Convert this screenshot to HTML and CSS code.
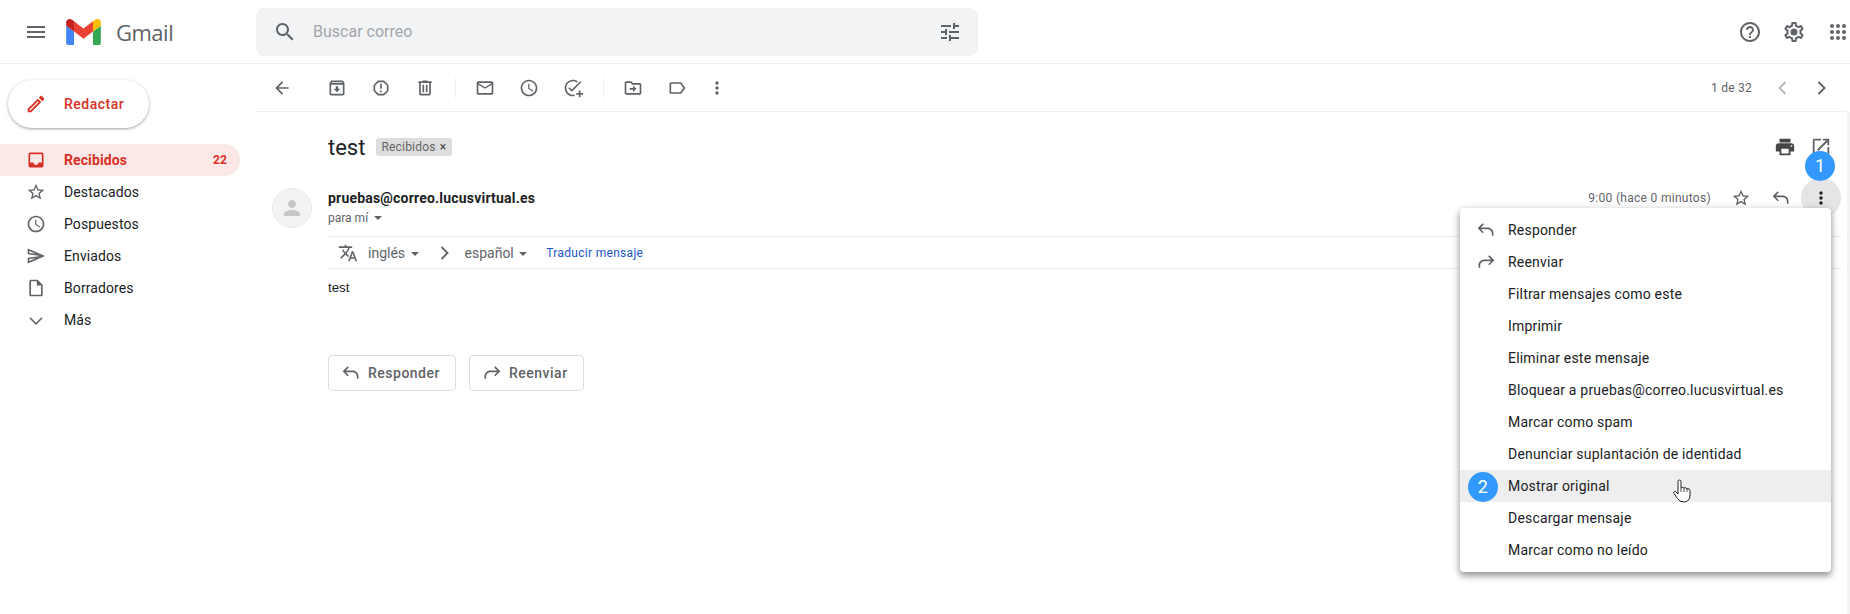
FILE: index.html
```html
<html>
<head>
  <title>Gmail</title>
  <link rel="stylesheet" href="styles.css">
</head>
<body>
  <svg class="sprite">
    <symbol id="i-menu" viewBox="0 0 24 24"><path d="M3 18h18v-2H3v2zm0-5h18v-2H3v2zm0-7v2h18V6H3z"/></symbol>
    <symbol id="i-search" viewBox="0 0 24 24"><path d="M15.5 14h-.79l-.28-.27C15.41 12.59 16 11.11 16 9.5 16 5.91 13.09 3 9.5 3S3 5.91 3 9.5 5.91 16 9.5 16c1.61 0 3.09-.59 4.23-1.57l.27.28v.79l5 4.99L20.49 19l-4.99-5zm-6 0C7.01 14 5 11.99 5 9.5S7.01 5 9.5 5 14 7.01 14 9.5 11.99 14 9.5 14z"/></symbol>
    <symbol id="i-tune" viewBox="0 0 24 24"><path d="M3 17v2h6v-2H3zM3 5v2h10V5H3zm10 16v-2h8v-2h-8v-2h-2v6h2zM7 9v2H3v2h4v2h2V9H7zm14 4v-2H11v2h10zm-6-4h2V7h4V5h-4V3h-2v6z"/></symbol>
    <symbol id="i-help" viewBox="0 0 24 24"><path d="M11 18h2v-2h-2v2zm1-16C6.48 2 2 6.48 2 12s4.48 10 10 10 10-4.48 10-10S17.52 2 12 2zm0 18c-4.41 0-8-3.59-8-8s3.59-8 8-8 8 3.59 8 8-3.59 8-8 8zm0-14c-2.21 0-4 1.79-4 4h2c0-1.1.9-2 2-2s2 .9 2 2c0 2-3 1.75-3 5h2c0-2.25 3-2.5 3-5 0-2.21-1.79-4-4-4z"/></symbol>
    <symbol id="i-gear" viewBox="0 0 24 24"><path d="M19.43 12.98c.04-.32.07-.64.07-.98 0-.34-.03-.66-.07-.98l2.11-1.65c.19-.15.24-.42.12-.64l-2-3.46c-.09-.16-.26-.25-.44-.25-.06 0-.12.01-.17.03l-2.49 1c-.52-.4-1.08-.73-1.69-.98l-.38-2.65C14.46 2.18 14.25 2 14 2h-4c-.25 0-.46.18-.49.42l-.38 2.65c-.61.25-1.17.59-1.69.98l-2.49-1c-.06-.02-.12-.03-.18-.03-.17 0-.34.09-.43.25l-2 3.46c-.13.22-.07.49.12.64l2.11 1.65c-.04.32-.07.65-.07.98 0 .33.03.66.07.98l-2.11 1.65c-.19.15-.24.42-.12.64l2 3.46c.09.16.26.25.44.25.06 0 .12-.01.17-.03l2.49-1c.52.4 1.08.73 1.69.98l.38 2.65c.03.24.24.42.49.42h4c.25 0 .46-.18.49-.42l.38-2.65c.61-.25 1.17-.59 1.69-.98l2.49 1c.06.02.12.03.18.03.17 0 .34-.09.43-.25l2-3.46c.12-.22.07-.49-.12-.64l-2.11-1.65zm-1.98-1.71c.04.31.05.52.05.73 0 .21-.02.43-.05.73l-.14 1.13.89.7 1.08.84-.7 1.21-1.27-.51-1.04-.42-.9.68c-.43.32-.84.56-1.25.73l-1.06.43-.16 1.13-.2 1.35h-1.4l-.19-1.35-.16-1.13-1.06-.43c-.43-.18-.83-.41-1.23-.71l-.91-.7-1.06.43-1.27.51-.7-1.21 1.08-.84.89-.7-.14-1.13c-.03-.31-.05-.54-.05-.74s.02-.43.05-.73l.14-1.13-.89-.7-1.08-.84.7-1.21 1.27.51 1.04.42.9-.68c.43-.32.84-.56 1.25-.73l1.06-.43.16-1.13.2-1.35h1.39l.19 1.35.16 1.13 1.06.43c.43.18.83.41 1.23.71l.91.7 1.06-.43 1.27-.51.7 1.21-1.07.85-.89.7.14 1.13zM12 8.5a3.5 3.5 0 1 0 0 7 3.5 3.5 0 0 0 0-7z"/></symbol>
    <symbol id="i-apps" viewBox="0 0 24 24"><circle cx="6" cy="6" r="2"/><circle cx="12" cy="6" r="2"/><circle cx="18" cy="6" r="2"/><circle cx="6" cy="12" r="2"/><circle cx="12" cy="12" r="2"/><circle cx="18" cy="12" r="2"/><circle cx="6" cy="18" r="2"/><circle cx="12" cy="18" r="2"/><circle cx="18" cy="18" r="2"/></symbol>
    <symbol id="i-pencil" viewBox="0 0 24 24"><path d="M14.06 9.02l.92.92L5.92 19H5v-.92l9.06-9.06M17.66 3c-.25 0-.51.1-.7.29l-1.83 1.83 3.75 3.75 1.83-1.83c.39-.39.39-1.02 0-1.41l-2.34-2.34c-.2-.2-.45-.29-.71-.29zm-3.6 3.19L3 17.25V21h3.75L17.81 9.94l-3.75-3.75z"/></symbol>
    <symbol id="i-inbox" viewBox="0 0 24 24"><path d="M19 3H5c-1.1 0-2 .9-2 2v14c0 1.1.9 2 2 2h14c1.1 0 2-.9 2-2V5c0-1.1-.9-2-2-2zm0 12h-4c0 1.66-1.34 3-3 3s-3-1.34-3-3H5V5h14v10z"/></symbol>
    <symbol id="i-star" viewBox="0 0 24 24"><path d="M22 9.24l-7.19-.62L12 2 9.19 8.63 2 9.24l5.46 4.73L5.82 21 12 17.27 18.18 21l-1.63-7.03L22 9.24zM12 15.4l-3.76 2.27 1-4.28-3.32-2.88 4.38-.38L12 6.1l1.71 4.04 4.38.38-3.32 2.88 1 4.28L12 15.4z"/></symbol>
    <symbol id="i-clock" viewBox="0 0 24 24"><path d="M11.99 2C6.47 2 2 6.48 2 12s4.47 10 9.99 10C17.52 22 22 17.52 22 12S17.52 2 11.99 2zM12 20c-4.42 0-8-3.58-8-8s3.58-8 8-8 8 3.58 8 8-3.58 8-8 8zm.5-13H11v6l5.25 3.15.75-1.23-4.5-2.67z"/></symbol>
    <symbol id="i-send" viewBox="0 0 24 24"><path d="M4.01 6.03l7.51 3.22-7.52-1 .01-2.22m7.5 8.72L4 17.97v-2.22l7.51-1M2.01 3L2 10l15 2-15 2 .01 7L23 12 2.01 3z"/></symbol>
    <symbol id="i-file" viewBox="0 0 24 24"><path d="M14 2H6c-1.1 0-1.99.9-1.99 2L4 20c0 1.1.89 2 1.99 2H18c1.1 0 2-.9 2-2V8l-6-6zM6 20V4h7v5h5v11H6z"/></symbol>
    <symbol id="i-down" viewBox="0 0 24 24"><path d="M5.4 8.6L4 10l8 8 8-8-1.4-1.4-6.6 6.6z"/></symbol>
    <symbol id="i-back" viewBox="0 0 24 24"><path d="M20 11H7.83l5.59-5.59L12 4l-8 8 8 8 1.41-1.41L7.83 13H20v-2z"/></symbol>
    <symbol id="i-archive" viewBox="0 0 24 24"><path d="M20.54 5.23l-1.39-1.68C18.88 3.21 18.47 3 18 3H6c-.47 0-.88.21-1.16.55L3.46 5.23C3.17 5.57 3 6.02 3 6.5V19c0 1.1.9 2 2 2h14c1.1 0 2-.9 2-2V6.5c0-.48-.17-.93-.46-1.27zM6.24 5h11.52l.83 1H5.42l.82-1zM5 19V8h14v11H5zm8.45-9h-2.9v3H8l4 4 4-4h-2.55z"/></symbol>
    <symbol id="i-report" viewBox="0 0 24 24"><path d="M15.73 3H8.27L3 8.27v7.46L8.27 21h7.46L21 15.73V8.27L15.73 3zM19 14.9L14.9 19H9.1L5 14.9V9.1L9.1 5h5.8L19 9.1v5.8zM11 7h2v6h-2zM11 15h2v2h-2z"/></symbol>
    <symbol id="i-trash" viewBox="0 0 24 24"><path d="M15 4V3H9v1H4v2h1v13c0 1.1.9 2 2 2h10c1.1 0 2-.9 2-2V6h1V4h-5zm2 15H7V6h10v13zM9 8h2v9H9zm4 0h2v9h-2z"/></symbol>
    <symbol id="i-mail" viewBox="0 0 24 24"><path d="M22 6c0-1.1-.9-2-2-2H4c-1.1 0-2 .9-2 2v12c0 1.1.9 2 2 2h16c1.1 0 2-.9 2-2V6zm-2 0l-8 5-8-5h16zm0 12H4V8l8 5 8-5v10z"/></symbol>
    <symbol id="i-task" viewBox="0 0 24 24"><path d="M22 5.18L10.59 16.6l-4.24-4.24 1.41-1.41 2.83 2.83 10-10L22 5.18zM4 12c0-4.42 3.58-8 8-8 1.58 0 3.04.46 4.28 1.25l1.44-1.44C16.1 2.67 14.13 2 12 2 6.48 2 2 6.48 2 12s4.48 10 10 10c.7 0 1.4-.07 2-.2v-2.05c-.64.16-1.31.25-2 .25-4.42 0-8-3.58-8-8zM19 15h2v3h3v2h-3v3h-2v-3h-3v-2h3z"/></symbol>
    <symbol id="i-move" viewBox="0 0 24 24"><path d="M20 6h-8l-2-2H4c-1.1 0-1.99.9-1.99 2L2 18c0 1.1.9 2 2 2h16c1.1 0 2-.9 2-2V8c0-1.1-.9-2-2-2zm0 12H4V6h5.17l2 2H20v10zm-8-4H8v-2h4V9l4 4-4 4v-3z"/></symbol>
    <symbol id="i-label" viewBox="0 0 24 24"><path d="M17.63 5.84C17.27 5.33 16.67 5 16 5L5 5.01C3.9 5.01 3 5.9 3 7v10c0 1.1.9 1.99 2 1.99L16 19c.67 0 1.27-.33 1.63-.84L22 12l-4.37-6.16zM16 17H5V7h11l3.55 5L16 17z"/></symbol>
    <symbol id="i-more" viewBox="0 0 24 24"><path d="M12 8c1.1 0 2-.9 2-2s-.9-2-2-2-2 .9-2 2 .9 2 2 2zm0 2c-1.1 0-2 .9-2 2s.9 2 2 2 2-.9 2-2-.9-2-2-2zm0 6c-1.1 0-2 .9-2 2s.9 2 2 2 2-.9 2-2-.9-2-2-2z"/></symbol>
    <symbol id="i-left" viewBox="0 0 24 24"><path d="M15.4 4L17 5.6 10.6 12l6.4 6.4-1.6 1.6-8-8z"/></symbol>
    <symbol id="i-right" viewBox="0 0 24 24"><path d="M8.6 4L7 5.6 13.4 12 7 18.4 8.6 20l8-8z"/></symbol>
    <symbol id="i-print" viewBox="0 0 24 24"><path d="M19 8H5c-1.66 0-3 1.34-3 3v6h4v4h12v-4h4v-6c0-1.66-1.34-3-3-3zm-3 11H8v-5h8v5zm3-7c-.55 0-1-.45-1-1s.45-1 1-1 1 .45 1 1-.45 1-1 1zm-1-9H6v4h12V3z"/></symbol>
    <symbol id="i-popout" viewBox="0 0 24 24"><path d="M19 19H5V5h7V3H5c-1.11 0-2 .9-2 2v14c0 1.1.89 2 2 2h14c1.1 0 2-.9 2-2v-7h-2v7zM14 3v2h3.59l-9.83 9.83 1.41 1.41L19 6.41V10h2V3h-7z"/></symbol>
    <symbol id="i-reply" viewBox="0 0 24 24"><path d="M9.4 5.4L8 4l-6 6 6 6 1.4-1.4L5.8 11H14c2.8 0 5 2.2 5 5v3h2v-3c0-3.9-3.1-7-7-7H5.8z"/></symbol>
    <symbol id="i-forward" viewBox="0 0 24 24"><path d="M14.6 5.4L16 4l6 6-6 6-1.4-1.4 3.6-3.6H10c-2.8 0-5 2.2-5 5v3H3v-3c0-3.9 3.1-7 7-7h8.2z"/></symbol>
    <symbol id="i-translate" viewBox="0 0 24 24"><path d="M12.87 15.07l-2.54-2.51.03-.03c1.74-1.94 2.98-4.17 3.71-6.53H17V4h-7V2H8v2H1v1.99h11.17C11.5 7.92 10.44 9.75 9 11.35 8.07 10.32 7.3 9.19 6.69 8h-2c.73 1.63 1.73 3.17 2.98 4.56l-5.09 5.02L4 19l5-5 3.11 3.11.76-2.04zM18.5 10h-2L12 22h2l1.12-3h4.75L21 22h2l-4.5-12zm-2.62 7l1.62-4.33L19.12 17h-3.24z"/></symbol>
    <symbol id="i-person" viewBox="0 0 24 24"><path d="M12 12c2.21 0 4-1.79 4-4s-1.79-4-4-4-4 1.79-4 4 1.79 4 4 4zm0 2c-2.67 0-8 1.34-8 4v2h16v-2c0-2.66-5.33-4-8-4z"/></symbol>
  </svg>

  <div class="header">
    <svg class="icon header-menu"><use href="#i-menu"/></svg>
    <svg class="logo" viewBox="52 42 88 66">
      <path fill="#4285f4" d="M58 108h14V74L52 59v43c0 3.32 2.69 6 6 6"/>
      <path fill="#34a853" d="M120 108h14c3.32 0 6-2.69 6-6V59l-20 15"/>
      <path fill="#fbbc04" d="M120 48v26l20-15v-8c0-7.42-8.47-11.65-14.4-7.2"/>
      <path fill="#ea4335" d="M72 74V48l24 18 24-18v26L96 92"/>
      <path fill="#c5221f" d="M52 51v8l20 15V48l-5.6-4.2c-5.94-4.45-14.4-.22-14.4 7.2"/>
    </svg>
    <div class="brand">Gmail</div>
    <div class="search">
      <svg class="icon search-icon"><use href="#i-search"/></svg>
      <div class="search-text">Buscar correo</div>
      <svg class="icon"><use href="#i-tune"/></svg>
    </div>
    <div class="header-right">
      <svg class="icon"><use href="#i-help"/></svg>
      <svg class="icon"><use href="#i-gear"/></svg>
      <svg class="icon"><use href="#i-apps"/></svg>
    </div>
  </div>

  <div class="layout">
    <div class="sidebar">
      <div class="compose">
        <svg class="icon"><use href="#i-pencil"/></svg>
        <span>Redactar</span>
      </div>
      <div class="nav-row active">
        <svg class="icon"><use href="#i-inbox"/></svg>
        <span class="nav-label">Recibidos</span>
        <span class="nav-count">22</span>
      </div>
      <div class="nav-row"><svg class="icon"><use href="#i-star"/></svg><span class="nav-label">Destacados</span></div>
      <div class="nav-row"><svg class="icon"><use href="#i-clock"/></svg><span class="nav-label">Pospuestos</span></div>
      <div class="nav-row"><svg class="icon"><use href="#i-send"/></svg><span class="nav-label">Enviados</span></div>
      <div class="nav-row"><svg class="icon"><use href="#i-file"/></svg><span class="nav-label">Borradores</span></div>
      <div class="nav-row"><svg class="icon"><use href="#i-down"/></svg><span class="nav-label">Más</span></div>
    </div>

    <div class="main">
      <div class="toolbar">
        <svg class="icon tool tool-back"><use href="#i-back"/></svg>
        <svg class="icon tool"><use href="#i-archive"/></svg>
        <svg class="icon tool"><use href="#i-report"/></svg>
        <svg class="icon tool"><use href="#i-trash"/></svg>
        <div class="tool-sep"></div>
        <svg class="icon tool"><use href="#i-mail"/></svg>
        <svg class="icon tool"><use href="#i-clock"/></svg>
        <svg class="icon tool"><use href="#i-task"/></svg>
        <div class="tool-sep"></div>
        <svg class="icon tool"><use href="#i-move"/></svg>
        <svg class="icon tool"><use href="#i-label"/></svg>
        <svg class="icon tool tool-more"><use href="#i-more"/></svg>
        <div class="pager">1 de 32</div>
        <svg class="icon pager-prev"><use href="#i-left"/></svg>
        <svg class="icon pager-next"><use href="#i-right"/></svg>
      </div>

      <div class="thread">
        <div class="subject-row">
          <div class="subject">test</div>
          <div class="chip">Recibidos <span class="chip-x">×</span></div>
          <svg class="icon subject-print"><use href="#i-print"/></svg>
          <svg class="icon subject-pop"><use href="#i-popout"/></svg>
        </div>

        <div class="message">
          <div class="avatar"><svg class="icon"><use href="#i-person"/></svg></div>
          <div class="message-body">
            <div class="message-head">
              <div>
                <div class="sender">pruebas@correo.lucusvirtual.es</div>
                <div class="to">para mí <span class="caret"></span></div>
              </div>
              <div class="message-meta">
                <span class="date">9:00 (hace 0 minutos)</span>
                <svg class="icon"><use href="#i-star"/></svg>
                <svg class="icon"><use href="#i-reply"/></svg>
                <div class="more-circle"><svg class="icon"><use href="#i-more"/></svg></div>
              </div>
            </div>
            <div class="translate">
              <svg class="icon"><use href="#i-translate"/></svg>
              <span class="lang">inglés <span class="caret"></span></span>
              <svg class="icon translate-chevron"><use href="#i-right"/></svg>
              <span class="lang">español <span class="caret"></span></span>
              <span class="translate-link">Traducir mensaje</span>
            </div>
            <div class="text">test</div>
            <div class="actions">
              <div class="action-btn"><svg class="icon"><use href="#i-reply"/></svg>Responder</div>
              <div class="action-btn"><svg class="icon"><use href="#i-forward"/></svg>Reenviar</div>
            </div>
          </div>
        </div>
      </div>
    </div>
  </div>

  <div class="step step-one">1</div>

  <div class="menu">
    <div class="menu-row"><svg class="icon"><use href="#i-reply"/></svg>Responder</div>
    <div class="menu-row"><svg class="icon"><use href="#i-forward"/></svg>Reenviar</div>
    <div class="menu-row">Filtrar mensajes como este</div>
    <div class="menu-row">Imprimir</div>
    <div class="menu-row">Eliminar este mensaje</div>
    <div class="menu-row">Bloquear a pruebas@correo.lucusvirtual.es</div>
    <div class="menu-row">Marcar como spam</div>
    <div class="menu-row">Denunciar suplantación de identidad</div>
    <div class="menu-row hover">Mostrar original<div class="step step-two">2</div>
      <svg class="hand" viewBox="0 0 18 24">
        <path d="M5 13V2.500Q5 1 6.500 1Q8 1 8 2.500V9Q9.700 7.500 11 9Q12.700 8 14 9.800Q16.500 9 17 11.500V16Q17 23 10.500 23Q6.500 23 4.500 19.500L1 14.500Q.2 13 1.500 12.500Q3 12 4 14L5 15Z" fill="#fff" stroke="#222" stroke-width="1" stroke-linejoin="round"/>
        <path d="M8 9V13M11 9V13M14 10V13" stroke="#222" stroke-width=".8" fill="none"/>
      </svg>
    </div>
    <div class="menu-row">Descargar mensaje</div>
    <div class="menu-row">Marcar como no leído</div>
  </div>
</body>
</html>
```

FILE: styles.css
```css
body {
  margin: 0;
  width: 1850px;
  height: 614px;
  overflow: hidden;
  position: relative;
  background-color: #fff;
  font-family: Roboto, "Liberation Sans", sans-serif;
  font-size: 14px;
  color: #202124;
}

.sprite {
  display: none;
}

.icon {
  width: 20px;
  height: 20px;
  fill: #5f6368;
  flex: none;
  display: block;
}

/* barra de cima */
.header {
  height: 63px;
  border-bottom: 1px solid #eceef0;
  display: flex;
  align-items: center;
}

.header-menu {
  width: 24px;
  height: 24px;
  margin-left: 24px;
}

.logo {
  width: 35px;
  height: 26px;
  margin-left: 18px;
}

.brand {
  margin-left: 15px;
  width: 140px;
  font-family: "Open Sans", sans-serif;
  font-size: 22px;
  letter-spacing: -.5px;
  color: #5f6368;
}

.search {
  width: 722px;
  height: 48px;
  background-color: #f1f3f4;
  border-radius: 8px;
  display: flex;
  align-items: center;
  box-sizing: border-box;
  padding: 0 16px 0 17px;
}

.search .icon {
  width: 24px;
  height: 24px;
}

.search-text {
  margin-left: 16px;
  flex: 1;
  font-size: 16px;
  color: #a3a6aa;
}

.header-right {
  margin-left: auto;
  display: flex;
  width: 112px;
  gap: 20px;
}

.header-right .icon {
  width: 24px;
  height: 24px;
}

.layout {
  display: flex;
}

/* menu lateral */
.sidebar {
  width: 256px;
  flex: none;
}

.compose {
  width: 141px;
  height: 48px;
  margin: 16px 0 16px 8px;
  border-radius: 24px;
  background-color: #fff;
  box-shadow: 0 1px 2px rgba(60, 64, 67, .3), 0 1px 3px 1px rgba(60, 64, 67, .15);
  display: flex;
  align-items: center;
  padding-left: 17px;
  box-sizing: border-box;
  gap: 17px;
  font-weight: 500;
  letter-spacing: .5px;
  color: #d93025;
}

.compose .icon {
  width: 22px;
  height: 22px;
  fill: #d93025;
}

.nav-row {
  width: 240px;
  height: 32px;
  display: flex;
  align-items: center;
  padding-left: 26px;
  box-sizing: border-box;
  border-radius: 0 16px 16px 0;
  letter-spacing: .1px;
}

.nav-label {
  margin-left: 18px;
  flex: 1;
}

.nav-row.active {
  background-color: #fce8e6;
  color: #d93025;
  font-weight: 700;
}

.nav-row.active .icon {
  fill: #d93025;
}

.nav-count {
  font-size: 12px;
  margin-right: 13px;
}

/* area principal */
.main {
  flex: 1;
  min-width: 0;
}

.toolbar {
  height: 47px;
  margin-right: 3px;
  border-bottom: 1px solid #eceef0;
  display: flex;
  align-items: center;
  padding-left: 4px;
}

.tool {
  padding: 0 12px;
}

.tool-back {
  margin-right: 11px;
}

.tool-more {
  margin-left: -4px;
}

.tool-sep {
  width: 1px;
  height: 20px;
  background-color: #eceef0;
  margin: 0 7px 0 8px;
}

.pager {
  margin-left: auto;
  font-size: 12px;
  letter-spacing: .25px;
  color: #5f6368;
}

.pager-prev {
  margin-left: 20px;
  fill: #b4b7ba;
}

.pager-next {
  margin-left: 20px;
  margin-right: 15px;
}

.thread {
  height: 503px;
  border-right: 3px solid #f1f3f4;
}

.subject-row {
  height: 70px;
  padding: 0 16px 2px 72px;
  display: flex;
  align-items: center;
}

.subject {
  font-size: 22px;
}

.chip {
  margin-left: 11px;
  height: 18px;
  line-height: 18px;
  padding: 0 6px 0 5px;
  border-radius: 3px;
  background-color: #ddd;
  font-size: 12px;
  letter-spacing: .2px;
  color: #666;
}

.chip-x {
  color: #444;
  margin-left: 1px;
}

.subject-print {
  margin-left: auto;
  fill: #444746;
  width: 22px;
  height: 22px;
}

.subject-pop {
  margin-left: 14px;
  margin-right: -1px;
  width: 22px;
  height: 22px;
}

.message {
  display: flex;
  padding: 4px 6px 0 16px;
}

.avatar {
  width: 38px;
  height: 38px;
  border: 1px solid #eaeaea;
  border-radius: 50%;
  background-color: #f3f3f3;
  display: flex;
  align-items: center;
  justify-content: center;
  flex: none;
}

.avatar .icon {
  width: 24px;
  height: 24px;
  fill: #c6c6c6;
}

.message-body {
  flex: 1;
  margin-left: 16px;
  min-width: 0;
}

.message-head {
  display: flex;
  justify-content: space-between;
  height: 48px;
}

.sender {
  font-weight: 700;
  letter-spacing: .2px;
  line-height: 20px;
}

.to {
  font-size: 12px;
  color: #5f6368;
  line-height: 20px;
}

.caret {
  display: inline-block;
  width: 0;
  height: 0;
  margin: 0 0 2px 3px;
  border-left: 4px solid transparent;
  border-right: 4px solid transparent;
  border-top: 4px solid #5f6368;
}

.message-meta {
  display: flex;
  align-items: center;
  height: 40px;
  margin-top: -10px;
  color: #5f6368;
}

.date {
  font-size: 12px;
  letter-spacing: .3px;
  margin-right: 20px;
}

.message-meta > .icon {
  margin-right: 20px;
}

.more-circle {
  width: 40px;
  height: 40px;
  border-radius: 50%;
  background-color: #e5e5e5;
  display: flex;
  align-items: center;
  justify-content: center;
  margin-left: -10px;
}

.more-circle .icon {
  fill: #202124;
}

.translate {
  height: 31px;
  border-top: 1px solid #e8eaed;
  border-bottom: 1px solid #e8eaed;
  display: flex;
  align-items: center;
  padding-left: 10px;
  color: #5f6368;
}

.lang {
  margin-left: 10px;
}

.translate .caret {
  margin-left: 2px;
}

.translate-chevron {
  margin-left: 16px;
}

.translate-link {
  margin-left: 19px;
  font-size: 12px;
  letter-spacing: .3px;
  color: #1a56c8;
}

.text {
  margin-top: 10px;
  font-family: "Liberation Sans", sans-serif;
  font-size: 13.3px;
  line-height: 18px;
}

.actions {
  display: flex;
  gap: 13px;
  margin-top: 58px;
}

.action-btn {
  height: 34px;
  border: 1px solid #dadce0;
  border-radius: 4px;
  display: flex;
  align-items: center;
  gap: 7px;
  padding: 0 15px 0 12px;
  font-weight: 500;
  letter-spacing: .5px;
  color: #5f6368;
}

/* menu aberto */
.menu {
  position: absolute;
  left: 1460px;
  top: 208px;
  width: 371px;
  padding: 6px 0;
  background-color: #fff;
  border-radius: 4px;
  box-shadow: 0 4px 6px rgba(0, 0, 0, .3), 0 2px 10px rgba(0, 0, 0, .2);
}

.menu-row {
  height: 32px;
  display: flex;
  align-items: center;
  padding-left: 48px;
  position: relative;
  letter-spacing: .2px;
}

.menu-row .icon {
  position: absolute;
  left: 16px;
  top: 6px;
}

.menu-row.hover {
  background-color: #eee;
}

.step {
  position: absolute;
  width: 30px;
  height: 30px;
  border-radius: 50%;
  background-color: #3399ff;
  color: #fff;
  font-size: 18px;
  line-height: 30px;
  text-align: center;
}

.step-one {
  left: 1805px;
  top: 151px;
}

.step-two {
  left: 8px;
  top: 2px;
}

.hand {
  position: absolute;
  left: 213px;
  top: 9px;
  width: 18px;
  height: 24px;
}
```
